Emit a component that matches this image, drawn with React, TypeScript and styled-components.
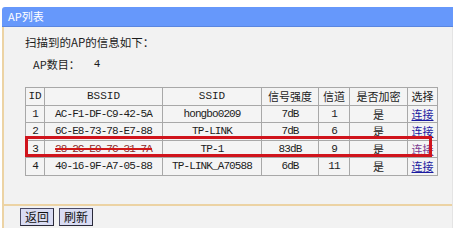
import React from 'react';
import styled, { createGlobalStyle } from 'styled-components';

const GlobalStyle = createGlobalStyle`
  html, body {
    margin: 0;
    padding: 0;
    background: #ffffff;
  }
  body {
    font-family: "Liberation Mono", "Noto Sans CJK SC", monospace;
    font-size: 11px;
    color: #1c1c1c;
  }
`;

const Page = styled.div`
  padding: 7px 13px 20px 2px;
`;

const TitleBar = styled.div`
  height: 19px;
  line-height: 19px;
  background: #6698fb;
  border-bottom: 1px solid #5a86e0;
  border-top-left-radius: 3px;
  color: #ffffff;
  padding-left: 6px;
  font-family: "Noto Sans CJK SC", sans-serif;
  font-size: 11px;
`;

const Panel = styled.div`
  background: #f2f2f2;
  border-left: 2px solid #ecd3a4;
  border-right: 1px solid #e4e4e4;
`;

const Content = styled.div`
  padding: 7px 0 28px 21px;
`;

const Intro = styled.div`
  height: 16px;
  line-height: 16px;
  font-family: "Noto Sans CJK SC", sans-serif;
  font-size: 11.5px;
`;

const Count = styled.div`
  margin-top: 6px;
  padding-left: 8px;
  height: 16px;
  line-height: 16px;
  display: flex;
  gap: 14px;
  font-family: "Noto Sans CJK SC", sans-serif;
  font-size: 11px;
`;

const Mono = styled.span`
  font-family: "Liberation Mono", monospace;
  letter-spacing: -0.9px;
`;

const TableWrap = styled.div`
  position: relative;
  margin-top: 15px;
  width: 407px;
`;

const Table = styled.table`
  border-collapse: collapse;
  width: 405px;
  table-layout: fixed;
  background: #f4f4f4;
`;

const Cell = styled.td<{ $w?: number }>`
  ${(p) => (p.$w ? `width: ${p.$w}px;` : '')}
  border: 1px solid #a8a8a8;
  padding: 0;
  text-align: center;
  vertical-align: middle;
  white-space: nowrap;
  overflow: hidden;
  font-family: "Liberation Mono", monospace;
  font-size: 11px;
  letter-spacing: -0.9px;
`;

const HeadCell = styled(Cell).attrs({ as: 'th' })`
  font-weight: normal;
  letter-spacing: 0;
`;

const Inner = styled.div`
  height: 16.6px;
  line-height: 16.6px;
  overflow: hidden;
`;

const CjkText = styled.span`
  font-family: "Noto Sans CJK SC", sans-serif;
  letter-spacing: 0;
  vertical-align: top;
  line-height: 16.6px;
`;

const Struck = styled.span`
  text-decoration: line-through;
  text-decoration-color: #d01818;
  text-decoration-thickness: 2px;
  color: #8a2a2a;
`;

const ConnectLink = styled.a<{ $visited?: boolean }>`
  font-family: "Noto Sans CJK SC", sans-serif;
  letter-spacing: 0;
  vertical-align: top;
  line-height: 16.6px;
  color: ${(p) => (p.$visited ? '#7b3b90' : '#1b1ba0')};
  text-decoration: underline;
  cursor: pointer;
`;

const Highlight = styled.div`
  position: absolute;
  left: 0;
  top: 49px;
  width: 401px;
  height: 15px;
  border: 3px solid #d0141c;
  pointer-events: none;
`;

const Footer = styled.div`
  border-top: 2px solid #ecd3a4;
  padding: 2px 0 2px 16px;
  display: flex;
  gap: 5px;
`;

const Button = styled.button`
  height: 18px;
  padding: 0 4px;
  background: #d9dcf3;
  border: 1px solid #4a4a66;
  border-right-color: #2a2a3a;
  border-bottom-color: #2a2a3a;
  font-family: "Noto Sans CJK SC", sans-serif;
  font-size: 12px;
  line-height: 15px;
  color: #111111;
`;

type Ap = {
  id: number;
  bssid: string;
  ssid: string;
  signal: string;
  channel: number;
  hidden?: boolean;
};

const aps: Ap[] = [
  { id: 1, bssid: 'AC-F1-DF-C9-42-5A', ssid: 'hongbo0209', signal: '7dB', channel: 1 },
  { id: 2, bssid: '6C-E8-73-78-E7-88', ssid: 'TP-LINK', signal: '7dB', channel: 6 },
  { id: 3, bssid: '28-2C-E0-7C-31-7A', ssid: 'TP-1', signal: '83dB', channel: 9, hidden: true },
  { id: 4, bssid: '40-16-9F-A7-05-88', ssid: 'TP-LINK_A70588', signal: '6dB', channel: 11 },
];

export default function App() {
  return (
    <Page>
      <GlobalStyle />
      <TitleBar>AP列表</TitleBar>
      <Panel>
        <Content>
          <Intro>扫描到的AP的信息如下：</Intro>
          <Count>
            <span>AP数目：</span>
            <Mono>4</Mono>
          </Count>
          <TableWrap>
            <Table>
              <thead>
                <tr>
                  <HeadCell $w={18}><Inner>ID</Inner></HeadCell>
                  <HeadCell $w={117}><Inner>BSSID</Inner></HeadCell>
                  <HeadCell $w={98}><Inner>SSID</Inner></HeadCell>
                  <HeadCell $w={56}><Inner><CjkText>信号强度</CjkText></Inner></HeadCell>
                  <HeadCell $w={30}><Inner><CjkText>信道</CjkText></Inner></HeadCell>
                  <HeadCell $w={57}><Inner><CjkText>是否加密</CjkText></Inner></HeadCell>
                  <HeadCell $w={29}><Inner><CjkText>选择</CjkText></Inner></HeadCell>
                </tr>
              </thead>
              <tbody>
                {aps.map((ap) => (
                  <tr key={ap.id}>
                    <Cell><Inner>{ap.id}</Inner></Cell>
                    <Cell>
                      <Inner>{ap.hidden ? <Struck>{ap.bssid}</Struck> : ap.bssid}</Inner>
                    </Cell>
                    <Cell><Inner>{ap.ssid}</Inner></Cell>
                    <Cell><Inner>{ap.signal}</Inner></Cell>
                    <Cell><Inner>{ap.channel}</Inner></Cell>
                    <Cell><Inner><CjkText>是</CjkText></Inner></Cell>
                    <Cell>
                      <Inner><ConnectLink $visited={ap.hidden}>连接</ConnectLink></Inner>
                    </Cell>
                  </tr>
                ))}
              </tbody>
            </Table>
            <Highlight />
          </TableWrap>
        </Content>
        <Footer>
          <Button>返回</Button>
          <Button>刷新</Button>
        </Footer>
      </Panel>
    </Page>
  );
}
